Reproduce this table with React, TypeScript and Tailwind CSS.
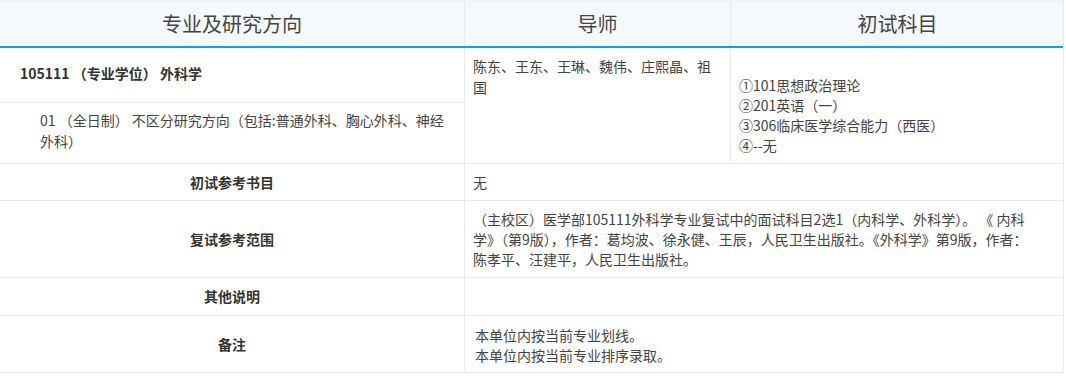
const font = { fontFamily: '"Microsoft YaHei", "Noto Sans CJK SC", "Noto Sans", sans-serif' };

const lowerRows = [
  { label: "初试参考书目", h: "h-[36px]", lines: ["无"] },
  {
    label: "复试参考范围",
    h: "h-[76px]",
    lines: [
      "（主校区）医学部105111外科学专业复试中的面试科目2选1（内科学、外科学）。 《 内科",
      "学》（第9版），作者：葛均波、徐永健、王辰，人民卫生出版社。《外科学》第9版，作者：",
      "陈孝平、汪建平，人民卫生出版社。",
    ],
  },
  { label: "其他说明", h: "h-[37px]", lines: [] },
  { label: "备注", h: "h-[56px]", lines: ["本单位内按当前专业划线。", "本单位内按当前专业排序录取。"], indent: true },
];

export default function App() {
  return (
    <div className="min-h-screen bg-white" style={font}>
      <div className="w-[1064px] border-r border-[#e6ebf0] border-b text-[#333]">
        {/* Header */}
        <div className="grid grid-cols-[465px_266px_333px] h-[48px] bg-[#f5f8fd] border-b-2 border-[#0aa3e3] border-t border-t-[#eef1f5]">
          {["专业及研究方向", "导师", "初试科目"].map((t, i) => (
            <div
              key={t}
              className={`flex items-center justify-center text-[20px] text-[#444] ${i < 2 ? "border-r border-[#e6ebf0]" : ""}`}
            >
              {t}
            </div>
          ))}
        </div>

        {/* Major + tutors + subjects */}
        <div className="grid grid-cols-[465px_266px_333px] border-b border-[#e6ebf0] text-[14px]">
          <div className="flex flex-col border-r border-[#e6ebf0]">
            <div className="h-[55px] flex items-center pl-5 pb-[4px] font-bold border-b border-[#e6ebf0]">
              105111 （专业学位） 外科学
            </div>
            <div className="h-[60px] pl-10 pr-4 pt-[7px] leading-[21px] text-[#444]">
              01 （全日制） 不区分研究方向（包括:普通外科、胸心外科、神经外科）
            </div>
          </div>
          <div className="border-r border-[#e6ebf0] px-2 pt-[8px] leading-[21px] text-[#444]">
            陈东、王东、王琳、魏伟、庄熙晶、祖国
          </div>
          <div className="px-2 pt-[27px] leading-5 text-[#444]">
            <div>①101思想政治理论</div>
            <div>②201英语（一）</div>
            <div>③306临床医学综合能力（西医）</div>
            <div>④--无</div>
          </div>
        </div>

        {/* Lower rows */}
        {lowerRows.map((r, idx) => (
          <div
            key={r.label}
            className={`grid grid-cols-[465px_599px] text-[14px] ${idx < lowerRows.length - 1 ? "border-b border-[#e6ebf0]" : ""}`}
          >
            <div className={`${r.h} flex items-center justify-center font-bold border-r border-[#e6ebf0]`}>
              {r.label}
            </div>
            <div
              className={`flex flex-col justify-center leading-5 text-[#444] whitespace-pre ${r.indent ? "pl-[10px] pr-2 pt-[1px]" : "px-2"}`}
            >
              {r.lines.map((l) => (
                <div key={l}>{l}</div>
              ))}
            </div>
          </div>
        ))}
      </div>
    </div>
  );
}
